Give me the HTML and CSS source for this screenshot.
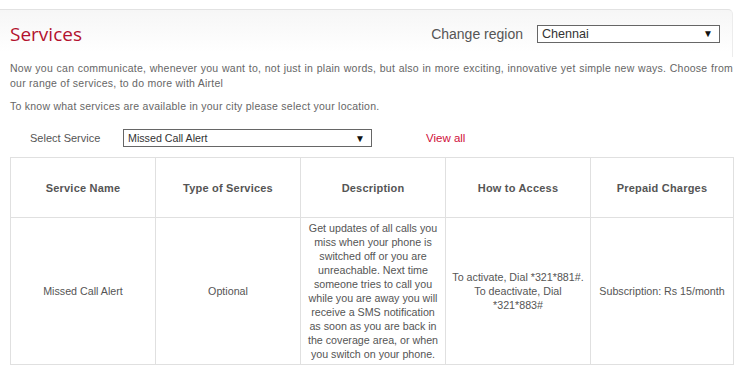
FILE: index.html
```html
<!DOCTYPE html>
<html lang="en">
<head>
  <meta charset="UTF-8">
  <title>Services</title>
  <link rel="stylesheet" href="styles.css">
</head>
<body>
  <div class="page">
    <div class="header">
      <h1 class="title">Services</h1>
      <div class="region">
        <span class="region-label">Change region</span>
        <div class="dropdown region-select">
          <span>Chennai</span>
          <span class="arrow">&#9660;</span>
        </div>
      </div>
    </div>

    <p class="intro"><span class="full-line">Now you can communicate, whenever you want to, not just in plain words, but also in more exciting, innovative yet simple new ways. Choose from</span> our range of services, to do more with Airtel</p>
    <p class="intro second">To know what services are available in your city please select your location.</p>

    <div class="filter">
      <span class="filter-label">Select Service</span>
      <div class="dropdown service-select">
        <span>Missed Call Alert</span>
        <span class="arrow">&#9660;</span>
      </div>
      <a href="#" class="view-all">View all</a>
    </div>

    <table class="services">
      <colgroup>
        <col class="col">
        <col class="col">
        <col class="col">
        <col class="col">
        <col class="col-last">
      </colgroup>
      <thead>
        <tr>
          <th>Service Name</th>
          <th>Type of Services</th>
          <th>Description</th>
          <th>How to Access</th>
          <th>Prepaid Charges</th>
        </tr>
      </thead>
      <tbody>
        <tr>
          <td>Missed Call Alert</td>
          <td>Optional</td>
          <td>Get updates of all calls you miss when your phone is switched off or you are unreachable. Next time someone tries to call you while you are away you will receive a SMS notification as soon as you are back in the coverage area, or when you switch on your phone.</td>
          <td>To activate, Dial *321*881#. To deactivate, Dial *321*883#</td>
          <td>Subscription: Rs 15/month</td>
        </tr>
      </tbody>
    </table>
  </div>
</body>
</html>
```

FILE: styles.css
```css
* {
  margin: 0;
  padding: 0;
  box-sizing: border-box;
}

body {
  width: 745px;
  background: #fff;
  font-family: "Liberation Sans", Arial, sans-serif;
  color: #666;
}

.page {
  padding: 9px 12px 0 10px;
}

.header {
  display: flex;
  align-items: center;
  justify-content: space-between;
  height: 48px;
  margin-left: -10px;
  padding: 0 12px 0 10px;
  border-top: 1px solid #e2e2e2;
  border-right: 1px solid #ececec;
  border-radius: 0 5px 0 0;
  background: linear-gradient(#f6f6f6, #fff 90%);
}

.title {
  font-family: "Open Sans", sans-serif;
  font-size: 19px;
  font-weight: 400;
  color: #b3112e;
}

.region {
  display: flex;
  align-items: center;
  gap: 14px;
}

.region-label {
  font-size: 14px;
  color: #555;
}

.dropdown {
  display: flex;
  align-items: center;
  justify-content: space-between;
  height: 18px;
  border: 1px solid #666;
  background: #fff;
  color: #333;
}

.arrow {
  font-size: 10px;
  color: #111;
}

.region-select {
  width: 183px;
  padding: 0 6px 0 4px;
  font-size: 12.6px;
}

.intro {
  margin-top: 4px;
  font-size: 10.5px;
  line-height: 15px;
  letter-spacing: 0.25px;
  color: #666;
}

.full-line {
  display: block;
  text-align: justify;
  text-align-last: justify;
}

.intro.second {
  margin-top: 8px;
}

.filter {
  display: flex;
  align-items: center;
  height: 18px;
  margin-top: 15px;
  padding-left: 20px;
}

.filter-label {
  width: 93px;
  font-size: 11px;
  color: #555;
}

.service-select {
  width: 249px;
  padding: 0 6px 0 4px;
  font-size: 10.7px;
}

.view-all {
  margin-left: 54px;
  font-size: 11.5px;
  color: #d0103a;
  text-decoration: none;
}

.services {
  width: 723px;
  margin-top: 10px;
  border-collapse: collapse;
  table-layout: fixed;
  color: #555;
}

.col {
  width: 145px;
}

.col-last {
  width: 143px;
}

.services th,
.services td {
  border: 1px solid #e0e0e0;
  text-align: center;
  vertical-align: middle;
}

.services th {
  height: 60px;
  font-size: 11px;
  font-weight: 700;
  letter-spacing: 0.2px;
}

.services td {
  height: 147px;
  padding: 0 4px;
  font-size: 10.7px;
  line-height: 14px;
}
```
